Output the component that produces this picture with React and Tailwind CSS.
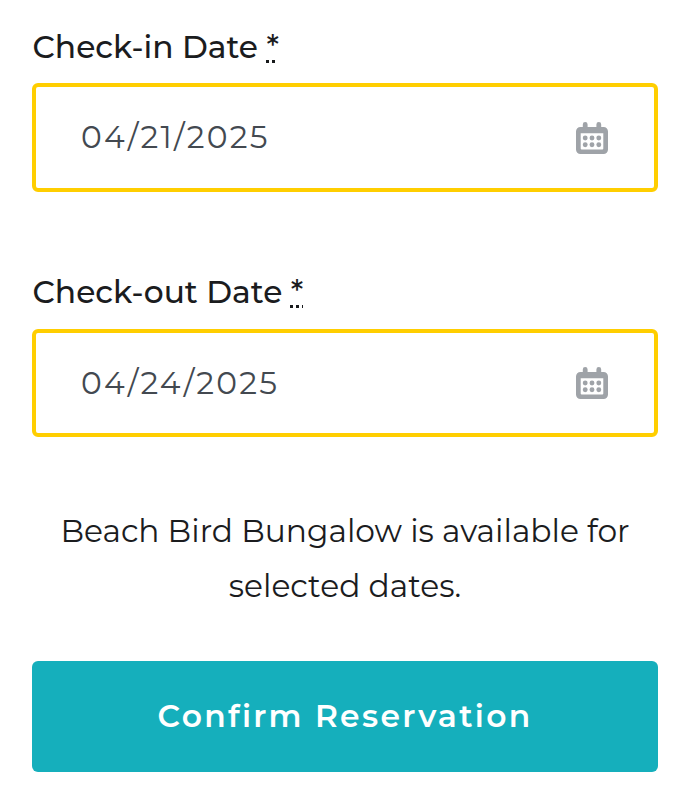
function CalendarIcon({ className = "" }) {
  return (
    <svg className={`h-8 w-8 shrink-0 ${className}`} viewBox="0 0 32 32" fill="#9fa3a8" aria-hidden="true">
      <path
        fillRule="evenodd"
        d="M6.800 2.400a2.400 2.400 0 0 1 4.800 0V5h8.800V2.400a2.400 2.400 0 0 1 4.800 0V5h2.400A4.400 4.400 0 0 1 32 9.400V27.600a4.400 4.400 0 0 1-4.400 4.400H4.400A4.400 4.400 0 0 1 0 27.600V9.400A4.400 4.400 0 0 1 4.400 5H6.800ZM4.700 11.200V26.500a1 1 0 0 0 1 1h20.600a1 1 0 0 0 1-1V11.200Z"
      />
      {[9.2, 16, 22.8].map((x) => [16, 22.8].map((y) => <circle key={`${x}-${y}`} cx={x} cy={y} r="2.45" />))}
    </svg>
  );
}

function Required({ dots }) {
  return (
    <abbr className="relative inline-block w-[13px] no-underline">
      *
      <span className={`absolute top-[34px] flex h-[3px] gap-[3px] overflow-hidden ${dots}`}>
        <i className="w-[3px] shrink-0 bg-[#17191b]" />
        <i className="w-[3px] shrink-0 bg-[#17191b]" />
        <i className="w-[3px] shrink-0 bg-[#17191b]" />
      </span>
    </abbr>
  );
}

export default function App() {
  return (
    <main className="flex h-[811px] w-[690px] flex-col bg-white px-8 pt-[26px] font-['Montserrat','Inter',sans-serif] text-[31.3px] text-[#1b1c1e]">
      <label className="block h-[42px] shrink-0 pl-[0.5px] leading-[42px] font-medium">
        Check-in Date <Required dots="left-0 w-[10px]" />
      </label>
      <div className="mt-[15px] flex h-[109px] shrink-0 items-center justify-between rounded-[6px] border-4 border-[#ffce00] pr-[46px] pl-[45px] text-[#434950]">
        <span className="tracking-[2.25px]">04/21/2025</span>
        <CalendarIcon className="mt-px" />
      </div>
      <label className="mt-[79px] block h-[42px] shrink-0 pl-[0.5px] leading-[42px] font-medium">
        Check-out Date <Required dots="-left-px w-[13px]" />
      </label>
      <div className="mt-4 flex h-[108px] shrink-0 items-center justify-between rounded-[6px] border-4 border-[#ffce00] pr-[46px] pl-[45px] text-[#434950]">
        <span className="tracking-[2.25px]">04/24/2025</span>
        <CalendarIcon />
      </div>
      <p className="mt-[67px] shrink-0 text-center leading-[55px]">
        Beach Bird Bungalow is available for selected dates.
      </p>
      <button className="mt-[47px] h-[111px] shrink-0 rounded-[6px] bg-[#15afbc] text-center font-semibold tracking-[2.34px] text-white">
        Confirm Reservation
      </button>
    </main>
  );
}
